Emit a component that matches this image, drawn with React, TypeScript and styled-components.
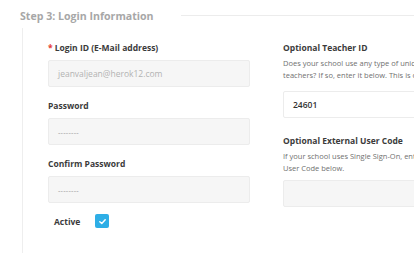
import React from 'react'
import styled, { createGlobalStyle } from 'styled-components'

const GlobalStyle = createGlobalStyle`
  html, body {
    margin: 0;
    padding: 0;
    background: #fff;
  }
  body {
    font-family: 'Open Sans', 'Noto Sans', sans-serif;
    overflow: hidden;
  }
`

const Page = styled.div`
  width: 414px;
  height: 253px;
  overflow: hidden;
  padding: 8px 0 0 20px;
  box-sizing: border-box;
`

const Legend = styled.div`
  display: flex;
  align-items: center;
  height: 15px;
`

const LegendTitle = styled.h3`
  margin: 0;
  font-size: 10.6px;
  font-weight: 700;
  color: #a7a7a7;
  white-space: nowrap;
`

const LegendLine = styled.div`
  flex: 1;
  height: 1px;
  margin-left: 27px;
  background: #ececec;
`

const Body = styled.div`
  margin: 5px 0 0 2px;
  border-left: 1px solid #eeeeee;
  padding: 14px 0 30px 25px;
  display: flex;
  gap: 33px;
`

const Column = styled.div<{ $width: number }>`
  width: ${(p) => p.$width}px;
  flex-shrink: 0;
  display: flex;
  flex-direction: column;
`

const Label = styled.label<{ $top?: number }>`
  display: block;
  margin-top: ${(p) => p.$top ?? 0}px;
  font-size: 8.5px;
  line-height: 12px;
  font-weight: 700;
  color: #3b3b3b;
  white-space: nowrap;
`

const Required = styled.span`
  color: #e53935;
  margin-right: 2px;
`

const Help = styled.p`
  margin: 3px 0 0;
  font-size: 7.5px;
  line-height: 12px;
  color: #707070;
`

const Input = styled.div<{ $filled?: boolean; $top?: number }>`
  margin-top: ${(p) => p.$top ?? 6}px;
  height: 27px;
  box-sizing: border-box;
  border: 1px solid #ececec;
  border-radius: 2px;
  background: ${(p) => (p.$filled ? '#ffffff' : '#f6f6f6')};
  display: flex;
  align-items: center;
  padding: 0 9px;
  font-size: 8.5px;
  color: ${(p) => (p.$filled ? '#333333' : '#b3b3b3')};
  font-weight: ${(p) => (p.$filled ? 600 : 400)};
  white-space: nowrap;
`

const Dots = styled.span`
  font-size: 7.5px;
  letter-spacing: 0.2px;
  color: #9a9a9a;
`

const CheckRow = styled.div`
  margin-top: 11px;
  padding-left: 6px;
  display: flex;
  align-items: center;
  gap: 15px;
`

const CheckLabel = styled.span`
  font-size: 8.5px;
  font-weight: 700;
  color: #3b3b3b;
`

const Checkbox = styled.span`
  width: 14px;
  height: 14px;
  border-radius: 2px;
  background: #2eaee6;
  display: inline-flex;
  align-items: center;
  justify-content: center;
`

const App: React.FC = () => {
  return (
    <>
      <GlobalStyle />
      <Page>
        <Legend>
          <LegendTitle>Step 3: Login Information</LegendTitle>
          <LegendLine />
        </Legend>
        <Body>
          <Column $width={202}>
            <Label>
              <Required>*</Required>Login ID (E-Mail address)
            </Label>
            <Input>jeanvaljean@herok12.com</Input>
            <Label $top={13}>Password</Label>
            <Input>
              <Dots>--------</Dots>
            </Input>
            <Label $top={13}>Confirm Password</Label>
            <Input>
              <Dots>--------</Dots>
            </Input>
            <CheckRow>
              <CheckLabel>Active</CheckLabel>
              <Checkbox>
                <svg width="9" height="9" viewBox="0 0 10 10">
                  <path
                    d="M2 5.2 L4.2 7.2 L8 3"
                    fill="none"
                    stroke="#fff"
                    strokeWidth="1.6"
                    strokeLinecap="round"
                    strokeLinejoin="round"
                  />
                </svg>
              </Checkbox>
            </CheckRow>
          </Column>
          <Column $width={200}>
            <Label>Optional Teacher ID</Label>
            <Help>
              Does your school use any type of unique ID number for teachers? If so, enter it
              below. This is optional.
            </Help>
            <Input $filled $top={10}>
              24601
            </Input>
            <Label $top={17}>Optional External User Code</Label>
            <Help>
              If your school uses Single Sign-On, enter the External User Code below.
            </Help>
            <Input $top={6} />
          </Column>
        </Body>
      </Page>
    </>
  )
}

export default App
